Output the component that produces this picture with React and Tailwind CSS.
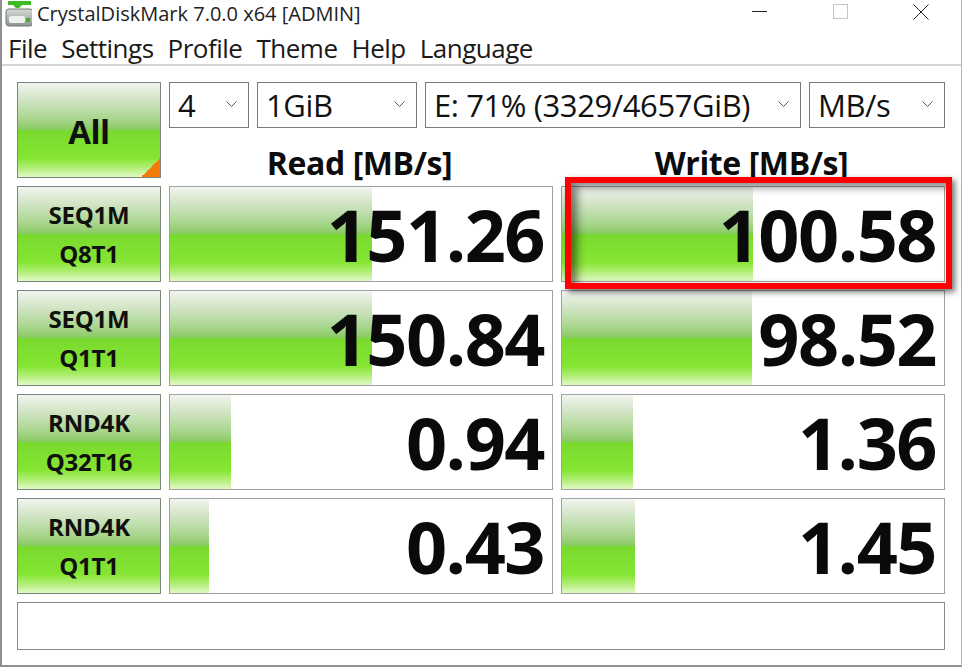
const font = "font-['Open_Sans','Noto_Sans',sans-serif]";
const gloss =
  "bg-[linear-gradient(to_bottom,#f1f4ef_0%,#d5e6ca_16%,#a9d68f_38%,#8ccb66_49%,#78da2d_51%,#7edf30_62%,#86e533_80%,#a8ec66_88%,#e2f8c6_100%)]";

const rows = [
  { a: "SEQ1M", b: "Q8T1", read: "151.26", readBar: 202, write: "100.58", writeBar: 191 },
  { a: "SEQ1M", b: "Q1T1", read: "150.84", readBar: 202, write: "98.52", writeBar: 190 },
  { a: "RND4K", b: "Q32T16", read: "0.94", readBar: 61, write: "1.36", writeBar: 71 },
  { a: "RND4K", b: "Q1T1", read: "0.43", readBar: 39, write: "1.45", writeBar: 73 },
];

function Chevron() {
  return (
    <svg width="11" height="7" viewBox="0 0 11 7" className="mb-[2px] text-[#555]">
      <path d="M0.5 0.5 L5.5 5.5 L10.5 0.5" fill="none" stroke="currentColor" strokeWidth="1" />
    </svg>
  );
}

function Select({ value, width }) {
  return (
    <div className={`${width} h-[46px] border border-[#7a7a7a] bg-white flex items-center pl-[8px] pr-[11px] justify-between`}>
      <span className="text-[31px] leading-none text-[#111] tracking-[-0.4px]">{value}</span>
      <Chevron />
    </div>
  );
}

function Score({ value, bar }) {
  return (
    <div className="relative h-[96px] border border-[#a0a0a0] bg-white flex items-center justify-end pr-[8px]">
      <div className={`absolute left-0 top-0 bottom-0 ${gloss}`} style={{ width: bar }} />
      <span className="relative text-[72px] leading-none font-bold text-[#0a0a0a] tracking-[-1.5px]">{value}</span>
    </div>
  );
}

function DiskIcon() {
  return (
    <svg width="29" height="26" viewBox="0 0 29 26" className="shrink-0">
      <defs>
        <linearGradient id="disk" x1="0" y1="0" x2="0" y2="1">
          <stop offset="0" stopColor="#d8dbd8" />
          <stop offset="1" stopColor="#8d948e" />
        </linearGradient>
      </defs>
      <path d="M5 0h23v4H19l-3 3h-3l-3-3H5z" fill="#3dba24" />
      <rect x="3" y="8" width="27" height="17" rx="3" fill="url(#disk)" stroke="#70786f" />
      <rect x="6" y="15" width="16" height="7" rx="2" fill="#eef0ee" />
      <rect x="23" y="17" width="4" height="4" fill="#4aa82f" />
    </svg>
  );
}

export default function App() {
  return (
    <div className={`relative w-[967px] h-[668px] bg-white ${font}`}>
      <div className="w-[962px] h-[667px] border-l-2 border-r border-b-2 border-[#8f8f8f] border-r-[#b5b5b5] flex flex-col">
        {/* Title bar */}
        <div className="h-[27px] flex items-center pl-[1px] shrink-0">
          <DiskIcon />
          <span className="ml-[5px] text-[20px] leading-none text-[#222]">CrystalDiskMark 7.0.0 x64 [ADMIN]</span>
          <div className="ml-auto flex items-center mb-[4px]">
            <div className="w-[15px] h-px bg-[#222]" />
            <div className="ml-[66px] w-[15px] h-[15px] border border-[#c4c4c4]" />
            <svg width="16" height="16" viewBox="0 0 16 16" className="ml-[65px] mr-[32px] text-[#222]">
              <path d="M0.5 0.5 L15.5 15.5 M15.5 0.5 L0.5 15.5" stroke="currentColor" strokeWidth="1" fill="none" />
            </svg>
          </div>
        </div>

        {/* Menu */}
        <div className="h-[39px] flex items-center pl-[6px] pt-[5px] gap-[14px] text-[26px] leading-none text-[#1a1a1a] border-b-2 border-[#d6d6d6] shrink-0 tracking-[-0.5px]">
          <span>File</span>
          <span>Settings</span>
          <span>Profile</span>
          <span>Theme</span>
          <span>Help</span>
          <span>Language</span>
        </div>

        {/* Main */}
        <div className="pt-[16px] pl-[15px] grid grid-cols-[144px_384px_384px] gap-2">
          <div className={`relative h-[96px] border border-[#7c857a] flex items-center justify-center overflow-hidden ${gloss}`}>
            <span className="text-[33px] leading-none font-bold text-[#101010] tracking-[-0.5px] mt-[3px]">All</span>
            <div className="absolute right-0 bottom-0 w-[19px] h-[19px] bg-[linear-gradient(135deg,transparent_50%,#f47a0a_50%)]" />
          </div>

          <div className="col-span-2 h-[96px] flex flex-col">
            <div className="flex gap-2 h-[46px]">
              <Select value="4" width="w-[80px]" />
              <Select value="1GiB" width="w-[160px]" />
              <Select value="E: 71% (3329/4657GiB)" width="w-[376px]" />
              <Select value="MB/s" width="w-[136px]" />
            </div>
            <div className="grid grid-cols-2 gap-2 flex-1 items-center text-center text-[32px] leading-none font-bold text-[#0c0c0c] tracking-[-0.4px]">
              <span className="mt-[19px] mr-[3px]">Read [MB/s]</span>
              <span className="mt-[19px] mr-[3px]">Write [MB/s]</span>
            </div>
          </div>

          {rows.map((row, i) => (
            <div key={i} className="contents">
              <div className={`h-[96px] border border-[#7c857a] flex flex-col items-center justify-center gap-[9px] text-[24px] leading-[30px] font-bold text-[#101010] tracking-[-0.2px] ${gloss}`}>
                <span>{row.a}</span>
                <span>{row.b}</span>
              </div>
              <Score value={row.read} bar={row.readBar} />
              <Score value={row.write} bar={row.writeBar} />
            </div>
          ))}

          <div className="col-span-3 h-[48px] border border-[#8a8a8a] bg-white" />
        </div>
      </div>

      {/* Red highlight drawn over the screenshot */}
      <div className="absolute left-[565px] top-[177px] w-[387px] h-[112px] border-[6px] border-[#fe0000] shadow-[3px_3px_6px_rgba(0,0,0,0.55),inset_6px_4px_8px_rgba(0,0,0,0.5)]" />
    </div>
  );
}
